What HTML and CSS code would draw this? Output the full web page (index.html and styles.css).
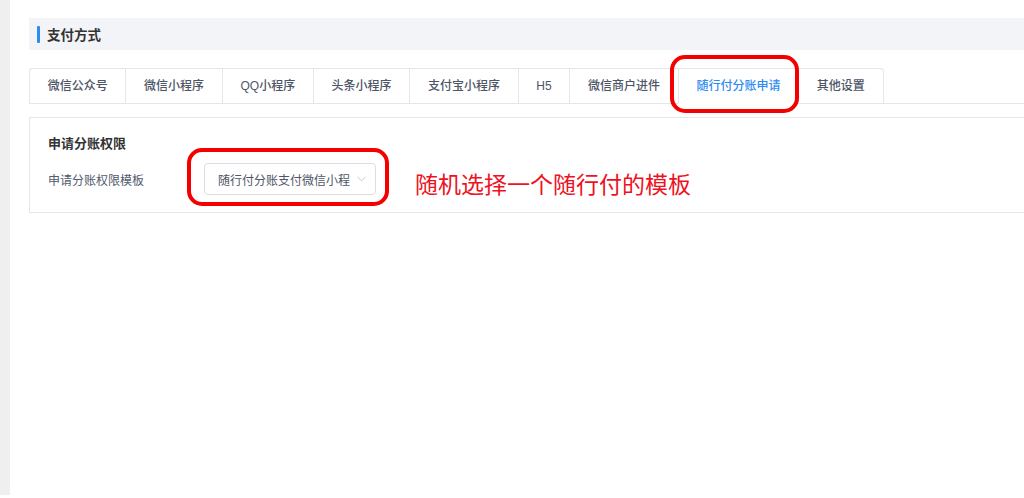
FILE: index.html
```html
<!DOCTYPE html>
<html lang="zh-CN">
<head>
<meta charset="utf-8">
<title>支付方式</title>
<link rel="stylesheet" href="styles.css">
</head>
<body>
<div class="page">
  <aside class="side"></aside>
  <main class="main">
    <div class="section-head"><span class="bar"></span><span class="section-title">支付方式</span></div>
    <nav class="tabs">
      <div class="tab">微信公众号</div>
      <div class="tab">微信小程序</div>
      <div class="tab">QQ小程序</div>
      <div class="tab">头条小程序</div>
      <div class="tab">支付宝小程序</div>
      <div class="tab">H5</div>
      <div class="tab">微信商户进件</div>
      <div class="tab active">随行付分账申请</div>
      <div class="tab">其他设置</div>
      <span class="ring ring-tab"></span>
    </nav>
    <section class="card">
      <div class="card-title">申请分账权限</div>
      <div class="form-row">
        <label class="label">申请分账权限模板</label>
        <div class="select">
          <span class="select-text">随行付分账支付微信小程</span>
          <svg class="chev" width="9" height="6" viewBox="0 0 9 6"><path d="M0.5 0.8 L4.5 4.8 L8.5 0.8" fill="none" stroke="#c5c8ce" stroke-width="1"/></svg>
          <span class="ring ring-select"></span>
        </div>
        <span class="note">随机选择一个随行付的模板</span>
      </div>
    </section>
  </main>
</div>
</body>
</html>
```
FILE: styles.css
```css
html, body {
  margin: 0;
  padding: 0;
  background: #fff;
  font-family: "Noto Sans CJK SC", "Noto Sans", "Liberation Sans", sans-serif;
}
.page {
  display: flex;
  height: 498px;
  overflow: hidden;
}
.side {
  width: 10px;
  flex: none;
  background: #efeff0;
  height: 495px;
}
.main {
  flex: 1;
  padding: 18px 0 0 19px;
  margin-right: -12px;
  min-width: 0;
}
.section-head {
  height: 32px;
  background: #f3f4f8;
  display: flex;
  align-items: center;
  padding-left: 8px;
}
.bar {
  width: 3px;
  height: 17px;
  background: #2d8cf0;
  margin-right: 7px;
  border-radius: 1px;
}
.section-title {
  font-size: 13.5px;
  font-weight: 700;
  color: #333;
}
.tabs {
  position: relative;
  display: flex;
  margin-top: 18px;
  border-bottom: 1px solid #e4e6ea;
}
.tab {
  height: 34px;
  line-height: 34px;
  padding: 0 17.7px;
  font-family: "Liberation Sans", "Noto Sans CJK SC", sans-serif;
  font-size: 12px;
  font-weight: 500;
  color: #4e5566;
  border-top: 1px solid #e4e6ea;
  border-left: 1px solid #e4e6ea;
  background: #fff;
  white-space: nowrap;
}
.tab:first-child { border-top-left-radius: 3px; }
.tab:nth-child(9) {
  border-right: 1px solid #e4e6ea;
  border-top-right-radius: 4px;
}
.tab.active {
  color: #2d8cf0;
  margin-bottom: -1px;
  border-bottom: 1px solid #fff;
}
.ring {
  position: absolute;
  border: 4px solid #f40000;
  border-radius: 15px;
  box-sizing: border-box;
  pointer-events: none;
}
.ring-tab {
  left: 641px;
  top: -13px;
  width: 129px;
  height: 58px;
}
.card {
  margin-top: 13px;
  border: 1px solid #e4e6ea;
  border-right: none;
  padding: 15px 0 17px 18px;
}
.card-title {
  font-size: 13px;
  font-weight: 700;
  color: #333;
  line-height: 20px;
}
.form-row {
  display: flex;
  align-items: center;
  margin-top: 10px;
}
.label {
  width: 156px;
  flex: none;
  font-size: 12px;
  color: #515a6e;
}
.select {
  position: relative;
  width: 172px;
  height: 32px;
  box-sizing: border-box;
  border: 1px solid #dcdee2;
  border-radius: 4px;
  display: flex;
  align-items: center;
  padding-left: 13px;
  flex: none;
}
.select-text {
  font-size: 12px;
  color: #4e5566;
  white-space: nowrap;
  overflow: hidden;
  width: 133px;
}
.chev {
  margin-left: 6px;
}
.ring-select {
  left: -18px;
  top: -16px;
  width: 202px;
  height: 58px;
}
.note {
  margin-left: 39px;
  font-size: 23px;
  color: #ee1122;
  white-space: nowrap;
  height: 32px;
  line-height: 40px;
}
```
